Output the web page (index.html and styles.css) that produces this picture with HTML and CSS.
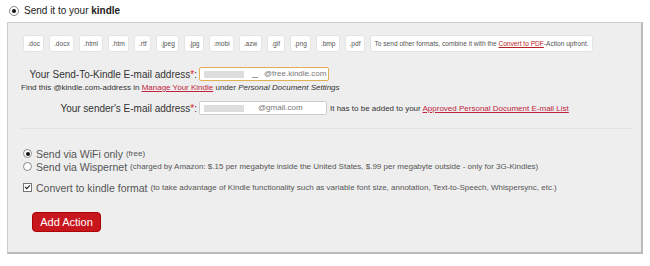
FILE: index.html
```html
<!DOCTYPE html>
<html lang="en">
<head>
    <meta charset="UTF-8">
    <title>Send it to your kindle</title>
    <link rel="stylesheet" href="styles.css">
</head>
<body>
    <div class="page">
        <label class="heading">
            <input type="radio" name="action" checked>
            <span>Send it to your <b>kindle</b></span>
        </label>
        <div class="panel">
            <div class="formats">
                <span class="pill">.doc</span>
                <span class="pill">.docx</span>
                <span class="pill">.html</span>
                <span class="pill">.htm</span>
                <span class="pill">.rtf</span>
                <span class="pill">.jpeg</span>
                <span class="pill">.jpg</span>
                <span class="pill">.mobi</span>
                <span class="pill">.azw</span>
                <span class="pill">.gif</span>
                <span class="pill">.png</span>
                <span class="pill">.bmp</span>
                <span class="pill">.pdf</span>
                <span class="pill">To send other formats, combine it with the <a href="#">Convert to PDF</a>-Action upfront.</span>
            </div>

            <div class="field">
                <label class="field-label">Your Send-To-Kindle E-mail address<span class="req">*</span>:</label>
                <div class="input focus"><span class="blur wide"></span><span class="blur dash"></span>@free.kindle.com</div>
            </div>
            <p class="hint">Find this @kindle.com-address in <a href="#">Manage Your Kindle</a> under <i>Personal Document Settings</i></p>

            <div class="field second">
                <label class="field-label">Your sender's E-mail address<span class="req">*</span>:</label>
                <div class="input"><span class="blur mid"></span>@gmail.com</div>
                <span class="note">It has to be added to your <a href="#">Approved Personal Document E-mail List</a></span>
            </div>

            <hr class="divider">

            <div class="options">
                <label class="option"><input type="radio" name="via" checked> Send via WiFi only <small>(free)</small></label>
                <label class="option"><input type="radio" name="via"> Send via Wispernet <small>(charged by Amazon: $.15 per megabyte inside the United States, $.99 per megabyte outside - only for 3G-Kindles)</small></label>
                <label class="option convert"><input type="checkbox" checked> Convert to kindle format <small>(to take advantage of Kindle functionality such as variable font size, annotation, Text-to-Speech, Whispersync, etc.)</small></label>
            </div>

            <button class="add-button">Add Action</button>
        </div>
    </div>
</body>
</html>
```

FILE: styles.css
```css
body {
    margin: 0;
    background-color: #fff;
    font-family: "Liberation Sans", Arial, sans-serif;
    color: #333;
}
.page {
    padding: 3px 7px 0 7px;
    width: 636px;
}
input[type="radio"],
input[type="checkbox"] {
    appearance: none;
    box-sizing: border-box;
    background-color: #fff;
    border: 1px solid #888;
    display: inline-grid;
    place-content: center;
}
input[type="radio"] {
    border-radius: 50%;
}
input[type="radio"]:checked::before {
    content: "";
    width: 4px;
    height: 4px;
    border-radius: 50%;
    background-color: #111;
}
input[type="checkbox"] {
    border-color: #777;
}
input[type="checkbox"]:checked::before {
    content: "";
    width: 4px;
    height: 2px;
    border-left: 1.5px solid #111;
    border-bottom: 1.5px solid #111;
    transform: translateY(-1px) rotate(-45deg);
}
.heading {
    display: flex;
    align-items: center;
    height: 15px;
    font-size: 10px;
    color: #222;
    margin-left: 2px;
}
.heading input {
    margin: 0 5px 0 0;
    width: 10px;
    height: 10px;
}
.panel {
    margin-top: 4px;
    background-color: #eee;
    border: 1px solid #ccc;
    border-right: 2px solid #bbb;
    border-bottom: 2px solid #bbb;
    height: 232px;
    box-sizing: border-box;
    padding: 12px 14px 0 15px;
}
.formats {
    display: flex;
    gap: 5px;
    font-size: 6.6px;
    color: #555;
    white-space: nowrap;
}
.pill {
    background-color: #fff;
    border-radius: 3px;
    padding: 0 3.5px;
    height: 15px;
    line-height: 15px;
    border: 1px solid #e4e4e4;
}
.pill a {
    color: #b22;
}
a {
    color: #c0243c;
}
.field {
    display: flex;
    align-items: center;
    margin-top: 15px;
    height: 14px;
    white-space: nowrap;
}
.field.second {
    margin-top: 9px;
}
.field-label {
    width: 174px;
    text-align: right;
    font-size: 10px;
    color: #333;
    padding-right: 2px;
}
.req {
    color: #d22;
}
.input {
    width: 122px;
    height: 12px;
    border: 1px solid #ccc;
    border-radius: 2px;
    background-color: #fff;
    font-size: 8px;
    color: #777;
    line-height: 12px;
    padding-left: 4px;
    display: flex;
    align-items: center;
}
.input.focus {
    border-color: #e0b050;
    width: 124px;
}
.blur {
    display: inline-block;
    height: 7px;
    background-color: #ddd;
}
.blur.wide {
    width: 40px;
    margin-right: 8px;
}
.blur.dash {
    width: 6px;
    height: 1px;
    background-color: #999;
    margin-top: 6px;
    margin-right: 6px;
}
.blur.mid {
    width: 40px;
    margin-right: 14px;
}
.note {
    font-size: 8px;
    color: #333;
    margin-left: 3px;
}
.hint {
    margin: 2px 0 0 -2px;
    font-size: 8px;
    color: #333;
}
.divider {
    border: none;
    border-top: 1px solid #e2e2e2;
    margin: 13px 0 0 -2px;
    width: 612px;
}
.options {
    margin-top: 18px;
    display: flex;
    flex-direction: column;
    color: #555;
    font-size: 10.5px;
}
.option {
    display: flex;
    align-items: center;
    height: 13px;
    white-space: nowrap;
}
.option input {
    margin: 0 4px 0 0;
    width: 9px;
    height: 9px;
}
.option small {
    font-size: 8px;
    margin-left: 3px;
}
.option.convert {
    margin-top: 8px;
}
.add-button {
    margin: 18px 0 0 9px;
    width: 69px;
    height: 20px;
    border: 1px solid #a00;
    border-radius: 4px;
    background-color: #c8161e;
    color: #fff;
    font-family: "Liberation Sans", Arial, sans-serif;
    font-size: 11px;
    padding: 0;
}
```
